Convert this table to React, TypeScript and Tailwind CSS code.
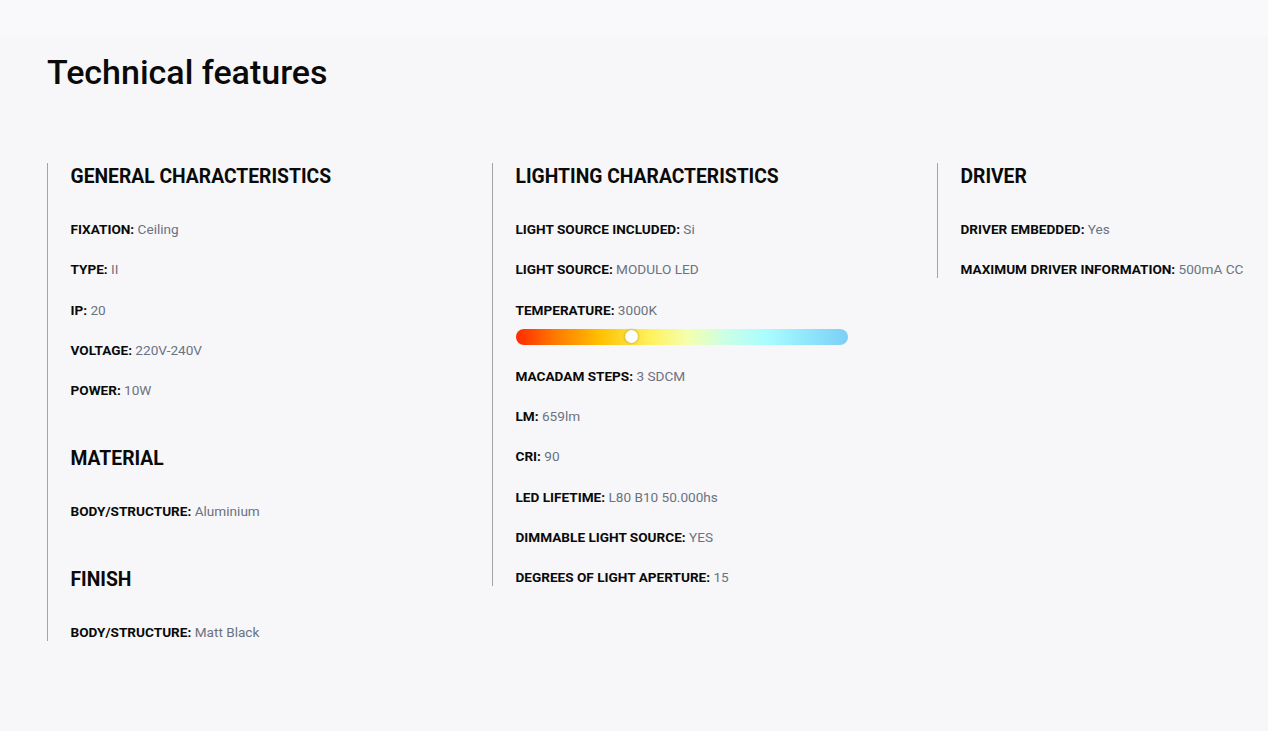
import React from "react";

type Item = { label: string; value: string; slider?: boolean };
type Section = { title: string; items: Item[] };

const columns: Section[][] = [
  [
    {
      title: "GENERAL CHARACTERISTICS",
      items: [
        { label: "FIXATION:", value: "Ceiling" },
        { label: "TYPE:", value: "II" },
        { label: "IP:", value: "20" },
        { label: "VOLTAGE:", value: "220V-240V" },
        { label: "POWER:", value: "10W" },
      ],
    },
    { title: "MATERIAL", items: [{ label: "BODY/STRUCTURE:", value: "Aluminium" }] },
    { title: "FINISH", items: [{ label: "BODY/STRUCTURE:", value: "Matt Black" }] },
  ],
  [
    {
      title: "LIGHTING CHARACTERISTICS",
      items: [
        { label: "LIGHT SOURCE INCLUDED:", value: "Si" },
        { label: "LIGHT SOURCE:", value: "MODULO LED" },
        { label: "TEMPERATURE:", value: "3000K", slider: true },
        { label: "MACADAM STEPS:", value: "3 SDCM" },
        { label: "LM:", value: "659lm" },
        { label: "CRI:", value: "90" },
        { label: "LED LIFETIME:", value: "L80 B10 50.000hs" },
        { label: "DIMMABLE LIGHT SOURCE:", value: "YES" },
        { label: "DEGREES OF LIGHT APERTURE:", value: "15" },
      ],
    },
  ],
  [
    {
      title: "DRIVER",
      items: [
        { label: "DRIVER EMBEDDED:", value: "Yes" },
        { label: "MAXIMUM DRIVER INFORMATION:", value: "500mA CC" },
      ],
    },
  ],
];

function Slider() {
  return (
    <div
      className="relative mt-[10px] h-[16px] w-[332px] rounded-full"
      style={{
        background:
          "linear-gradient(90deg, #ff2a00 0%, #ff7a00 12%, #ffbf00 25%, #fff15a 40%, #f4ffb0 52%, #c8ffe8 64%, #a8fcff 76%, #8fe6fb 88%, #7ccff5 100%)",
      }}
    >
      <div className="absolute left-[109px] top-[1.5px] h-[13px] w-[13px] rounded-full bg-white shadow-[0_0_3px_rgba(0,0,0,0.35)]" />
    </div>
  );
}

export default function App() {
  return (
    <div
      className="min-h-[731px] w-[1268px] overflow-hidden bg-[#f7f7f9] text-black"
      style={{ fontFamily: "Roboto, 'Liberation Sans', sans-serif" }}
    >
      <div className="h-[36px] bg-[#f9f9fb]" />
      <div className="pl-[47px] pt-[15px]">
        <h1 className="text-[34px] font-medium leading-[42px] text-[#0a0a0a]">Technical features</h1>
        <div className="mt-[70px] grid w-[1335px] grid-cols-[445px_445px_445px] items-start">
          {columns.map((sections, ci) => (
            <div key={ci} className="flex flex-col gap-[46px] border-l border-[#a3a3a3] pl-[22.5px]">
              {sections.map((s) => (
                <div key={s.title}>
                  <h2 className="mb-[29px] text-[19.3px] font-bold leading-[28px] text-[#0a0a0a]">{s.title}</h2>
                  <div className="flex flex-col gap-[22.25px]">
                    {s.items.map((it) => (
                      <div key={it.label}>
                        <div className="whitespace-nowrap text-[13.6px] leading-[18px]">
                          <span className="font-bold text-[#0a0a0a]">{it.label}</span>{" "}
                          <span className="text-[#6b7280]">{it.value}</span>
                        </div>
                        {it.slider && <Slider />}
                      </div>
                    ))}
                  </div>
                </div>
              ))}
            </div>
          ))}
        </div>
      </div>
    </div>
  );
}
